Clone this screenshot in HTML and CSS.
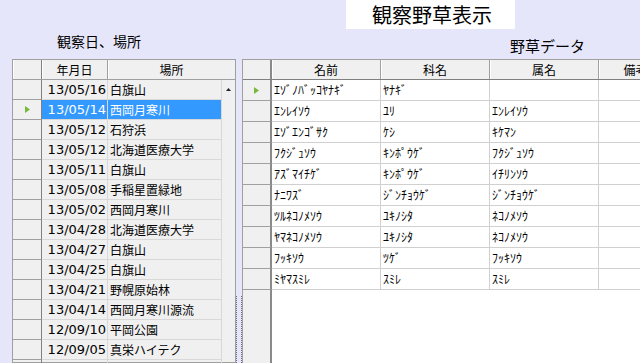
FILE: index.html
```html
<!DOCTYPE html>
<html lang="ja">
<head>
<meta charset="utf-8">
<title>観察野草表示</title>
<link rel="stylesheet" href="styles.css">
</head>
<body>
<div class="top">
  <div class="title-row"><div class="title">観察野草表示</div></div>
  <div class="label-row">
    <span class="label label-left">観察日、場所</span>
    <span class="label label-right">野草データ</span>
  </div>
</div>
<div class="main">
  <div class="lgrid">
    <div class="lhead">
      <div class="hcell h-rh"></div>
      <div class="hcell h-date">年月日</div>
      <div class="hcell h-place">場所</div>
    </div>
    <div class="lbody">
      <div class="lrows">
        <div class="lrow"><div class="lrh"></div><div class="ldate">13/05/16</div><div class="lplace">白旗山</div></div>
        <div class="lrow sel"><div class="lrh"><svg class="arrow" width="5" height="7" viewBox="0 0 5 7"><polygon points="0,0 5,3.5 0,7" fill="#78b83a"/></svg></div><div class="ldate">13/05/14</div><div class="lplace">西岡月寒川</div></div>
        <div class="lrow"><div class="lrh"></div><div class="ldate">13/05/12</div><div class="lplace">石狩浜</div></div>
        <div class="lrow"><div class="lrh"></div><div class="ldate">13/05/12</div><div class="lplace">北海道医療大学</div></div>
        <div class="lrow"><div class="lrh"></div><div class="ldate">13/05/11</div><div class="lplace">白旗山</div></div>
        <div class="lrow"><div class="lrh"></div><div class="ldate">13/05/08</div><div class="lplace">手稲星置緑地</div></div>
        <div class="lrow"><div class="lrh"></div><div class="ldate">13/05/02</div><div class="lplace">西岡月寒川</div></div>
        <div class="lrow"><div class="lrh"></div><div class="ldate">13/04/28</div><div class="lplace">北海道医療大学</div></div>
        <div class="lrow"><div class="lrh"></div><div class="ldate">13/04/27</div><div class="lplace">白旗山</div></div>
        <div class="lrow"><div class="lrh"></div><div class="ldate">13/04/25</div><div class="lplace">白旗山</div></div>
        <div class="lrow"><div class="lrh"></div><div class="ldate">13/04/21</div><div class="lplace">野幌原始林</div></div>
        <div class="lrow"><div class="lrh"></div><div class="ldate">13/04/14</div><div class="lplace">西岡月寒川源流</div></div>
        <div class="lrow"><div class="lrh"></div><div class="ldate">12/09/10</div><div class="lplace">平岡公園</div></div>
        <div class="lrow"><div class="lrh"></div><div class="ldate">12/09/05</div><div class="lplace">真栄ハイテク</div></div>
        <div class="lrow"><div class="lrh"></div><div class="ldate">12/08/26</div><div class="lplace">北海道医療大学</div></div>
      </div>
      <div class="vscroll"><svg width="5" height="3" viewBox="0 0 5 3"><polygon points="2.5,0 5,3 0,3" fill="#222"/></svg></div>
    </div>
  </div>
  <div class="splitter"><div class="dots"></div></div>
  <div class="rgrid">
    <div class="rhead">
      <div class="rh-cell"></div>
      <div class="rhc">名前</div>
      <div class="rhc">科名</div>
      <div class="rhc">属名</div>
      <div class="rhc narrow">備考</div>
    </div>
    <div class="rrow"><div class="rrh"><svg class="arrow" width="5" height="7" viewBox="0 0 5 7"><polygon points="0,0 5,3.5 0,7" fill="#78b83a"/></svg></div><div class="rc">ｴｿﾞﾉﾊﾞｯｺﾔﾅｷﾞ</div><div class="rc">ﾔﾅｷﾞ</div><div class="rc"></div><div class="rc narrow"></div></div>
    <div class="rrow"><div class="rrh"></div><div class="rc">ｴﾝﾚｲｿｳ</div><div class="rc">ﾕﾘ</div><div class="rc">ｴﾝﾚｲｿｳ</div><div class="rc narrow"></div></div>
    <div class="rrow"><div class="rrh"></div><div class="rc">ｴｿﾞｴﾝｺﾞｻｸ</div><div class="rc">ｹｼ</div><div class="rc">ｷｹﾏﾝ</div><div class="rc narrow"></div></div>
    <div class="rrow"><div class="rrh"></div><div class="rc">ﾌｸｼﾞｭｿｳ</div><div class="rc">ｷﾝﾎﾟｳｹﾞ</div><div class="rc">ﾌｸｼﾞｭｿｳ</div><div class="rc narrow"></div></div>
    <div class="rrow"><div class="rrh"></div><div class="rc">ｱｽﾞﾏｲﾁｹﾞ</div><div class="rc">ｷﾝﾎﾟｳｹﾞ</div><div class="rc">ｲﾁﾘﾝｿｳ</div><div class="rc narrow"></div></div>
    <div class="rrow"><div class="rrh"></div><div class="rc">ﾅﾆﾜｽﾞ</div><div class="rc">ｼﾞﾝﾁｮｳｹﾞ</div><div class="rc">ｼﾞﾝﾁｮｳｹﾞ</div><div class="rc narrow"></div></div>
    <div class="rrow"><div class="rrh"></div><div class="rc">ﾂﾙﾈｺﾉﾒｿｳ</div><div class="rc">ﾕｷﾉｼﾀ</div><div class="rc">ﾈｺﾉﾒｿｳ</div><div class="rc narrow"></div></div>
    <div class="rrow"><div class="rrh"></div><div class="rc">ﾔﾏﾈｺﾉﾒｿｳ</div><div class="rc">ﾕｷﾉｼﾀ</div><div class="rc">ﾈｺﾉﾒｿｳ</div><div class="rc narrow"></div></div>
    <div class="rrow"><div class="rrh"></div><div class="rc">ﾌｯｷｿｳ</div><div class="rc">ﾂｹﾞ</div><div class="rc">ﾌｯｷｿｳ</div><div class="rc narrow"></div></div>
    <div class="rrow"><div class="rrh"></div><div class="rc">ﾐﾔﾏｽﾐﾚ</div><div class="rc">ｽﾐﾚ</div><div class="rc">ｽﾐﾚ</div><div class="rc narrow"></div></div>
    <div class="rfill"><div class="rrh-fill"></div></div>
  </div>
</div>
</body>
</html>
```

FILE: styles.css
```css
* { box-sizing: border-box; }
html, body { margin: 0; padding: 0; }
body {
  width: 640px;
  height: 363px;
  overflow: hidden;
  background: #e6e6fa;
  color: #000;
  font-family: "Noto Sans CJK JP", sans-serif;
}
.top { height: 59px; }
.title-row { display: flex; padding-left: 346px; }
.title {
  width: 169px;
  height: 29px;
  background: #fff;
  font-size: 20px;
  line-height: 29px;
  padding-left: 26px;
  white-space: nowrap;
}
.label-row { display: flex; align-items: flex-start; height: 30px; }
.label { white-space: nowrap; line-height: 16px; }
.label-left { margin-left: 57px; margin-top: 4px; font-size: 14px; }
.label-right { margin-left: 369px; margin-top: 9px; font-size: 15px; }

.main { display: flex; height: 304px; padding-left: 12px; }

/* left grid */
.lgrid {
  flex: none;
  width: 224px;
  border: 1px solid #a0a0a0;
  background: #f0f0f0;
  display: flex;
  flex-direction: column;
}
.lhead { display: flex; height: 20px; border-bottom: 1px solid #a0a0a0; flex: none; }
.hcell {
  font-size: 12px;
  line-height: 19px;
  text-align: center;
  background: #f0f0f0;
  border-right: 1px solid #a0a0a0;
  box-shadow: inset 1px 0 #fff;
}
.h-rh { width: 29px; border-right-color: #808080; }
.h-date { width: 66px; }
.h-place { width: 127px; border-right: 0; }
.lbody { display: flex; flex: 1; }
.lrows { display: flex; flex-direction: column; }
.lrow { display: flex; height: 20px; }
.lrh {
  width: 29px;
  border-right: 1px solid #808080;
  border-bottom: 1px solid #a0a0a0;
  display: flex;
  align-items: center;
  justify-content: center;
}
.ldate {
  width: 66px;
  border-right: 1px solid #d8d8d8;
  border-bottom: 1px solid #d8d8d8;
  text-align: right;
  padding-right: 1px;
  font-family: "DejaVu Sans", sans-serif;
  font-size: 13px;
  line-height: 19px;
  white-space: nowrap;
}
.lplace {
  width: 114px;
  border-right: 1px solid #d8d8d8;
  border-bottom: 1px solid #d8d8d8;
  padding-left: 2px;
  font-size: 12px;
  line-height: 19px;
  white-space: nowrap;
  overflow: hidden;
}
.sel .ldate, .sel .lplace { background: #3399ff; color: #fff; }
.vscroll {
  width: 13px;
  display: flex;
  justify-content: center;
  align-items: flex-start;
  padding-top: 8px;
}
.vscroll svg { display: block; }
.arrow { display: block; }

/* splitter */
.splitter { flex: none; width: 6px; padding-top: 237px; }
.dots { height: 100%; border-left: 1px dotted #6a6a7a; border-right: 1px dotted #6a6a7a; }

/* right grid */
.rgrid {
  flex: none;
  width: 431px;
  border-left: 1px solid #a0a0a0;
  border-top: 1px solid #a0a0a0;
  background: #fff;
  display: flex;
  flex-direction: column;
}
.rhead { display: flex; height: 20px; border-bottom: 1px solid #808080; background: #f0f0f0; flex: none; }
.rh-cell { width: 29px; border-right: 2px solid #8a8a8a; }
.rhc {
  width: 109px;
  font-size: 12px;
  line-height: 19px;
  text-align: center;
  border-right: 1px solid #a0a0a0;
  box-shadow: inset 1px 0 #fff;
  white-space: nowrap;
}
.rrow { display: flex; height: 21px; flex: none; }
.rrh {
  width: 29px;
  background: #f0f0f0;
  border-right: 2px solid #8a8a8a;
  border-bottom: 1px solid #a0a0a0;
  display: flex;
  align-items: center;
  justify-content: center;
}
.rc {
  width: 109px;
  border-right: 1px solid #d0d0d0;
  border-bottom: 1px solid #d0d0d0;
  padding-left: 2px;
  font-size: 12px;
  line-height: 20px;
  white-space: nowrap;
  overflow: hidden;
}
.narrow { width: 74px; }
.rfill { flex: 1; display: flex; }
.rrh-fill { width: 29px; background: #f0f0f0; border-right: 2px solid #8a8a8a; }
```
